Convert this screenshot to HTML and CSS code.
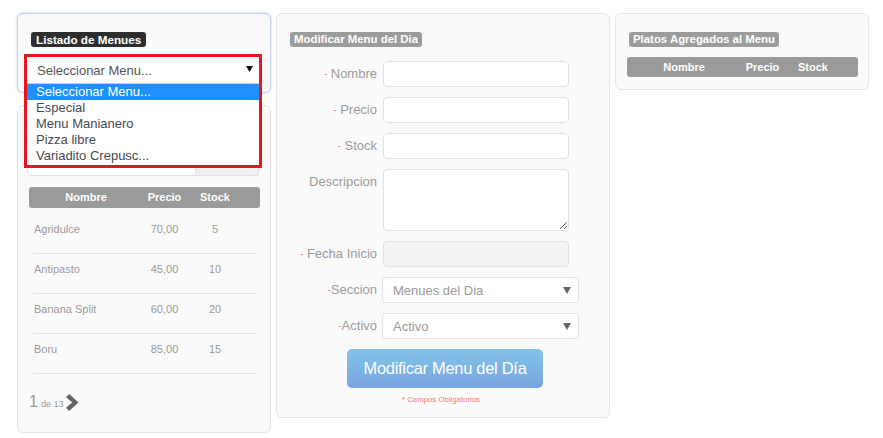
FILE: index.html
```html
<!DOCTYPE html>
<html lang="es">
<head>
<meta charset="utf-8">
<title>Menu del Día</title>
<link rel="stylesheet" href="styles.css">
</head>
<body>
<div class="page">
  <div class="col-left">
    <section class="panel panel-focus">
      <div class="tag tag-dark tag-big">Listado de Menues</div>
      <div class="picker">
        <div class="picker-pop">
          <div class="picker-field">
            <span>Seleccionar Menu...</span>
            <svg class="caret-black" width="7" height="6" viewBox="0 0 7 6"><polygon points="0,0 7,0 3.5,6" fill="#111"/></svg>
          </div>
          <ul class="picker-list">
            <li class="on">Seleccionar Menu...</li>
            <li>Especial</li>
            <li>Menu Manianero</li>
            <li>Pizza libre</li>
            <li>Variadito Crepusc...</li>
          </ul>
        </div>
      </div>
    </section>

    <section class="panel panel-list">
      <div class="tag-space"></div>
      <div class="search">
        <div class="search-input"></div>
        <div class="search-btn"></div>
      </div>
      <div class="thead cols">
        <span>Nombre</span><span>Precio</span><span>Stock</span>
      </div>
      <div class="rows">
        <div class="row cols"><span class="name">Agridulce</span><span>70,00</span><span>5</span></div>
        <div class="row cols"><span class="name">Antipasto</span><span>45,00</span><span>10</span></div>
        <div class="row cols"><span class="name">Banana Split</span><span>60,00</span><span>20</span></div>
        <div class="row cols"><span class="name">Boru</span><span>85,00</span><span>15</span></div>
      </div>
      <div class="pager">
        <span class="pg-num">1</span><span class="pg-of">de 13</span>
        <svg class="chev" width="13" height="17" viewBox="0 0 13 17"><polygon points="0,3.2 3.2,0 12.5,8.5 3.2,17 0,13.8 6.2,8.5" fill="#666"/></svg>
      </div>
    </section>
  </div>

  <section class="panel panel-form">
    <div class="tag">Modificar Menu del Dia</div>
    <div class="form">
      <label class="lbl"><span class="req">-</span> Nombre</label>
      <input class="field" type="text">
      <label class="lbl"><span class="req">-</span> Precio</label>
      <input class="field" type="text">
      <label class="lbl"><span class="req">-</span> Stock</label>
      <input class="field" type="text">
      <label class="lbl">Descripcion</label>
      <textarea class="field area"></textarea>
      <label class="lbl"><span class="req">-</span> Fecha Inicio</label>
      <input class="field disabled" type="text" disabled>
      <label class="lbl"><span class="req">-</span>Seccion</label>
      <div class="dropdown"><span>Menues del Dia</span><svg width="8" height="8" viewBox="0 0 8 8"><polygon points="0,1 8,1 4,8" fill="#666"/></svg></div>
      <label class="lbl"><span class="req">-</span>Activo</label>
      <div class="dropdown"><span>Activo</span><svg width="8" height="8" viewBox="0 0 8 8"><polygon points="0,1 8,1 4,8" fill="#666"/></svg></div>
    </div>
    <button class="btn" type="button">Modificar Menu del Día</button>
    <div class="note">* Campos Obligatorios</div>
  </section>

  <section class="panel panel-right">
    <div class="tag">Platos Agregados al Menu</div>
    <div class="thead cols">
      <span>Nombre</span><span>Precio</span><span>Stock</span>
    </div>
  </section>
</div>
</body>
</html>
```
FILE: styles.css
```css
* { box-sizing: border-box; }
html, body { margin: 0; padding: 0; background: #fff; }
body { font-family: "Liberation Sans", Arial, sans-serif; color: #999; }

.page {
  display: flex;
  align-items: flex-start;
  gap: 5px;
  padding: 13px 0 0 17px;
}

.col-left {
  width: 254px;
  display: flex;
  flex-direction: column;
  gap: 12px;
}

.panel {
  background: #fafafa;
  border: 1px solid #e4e4e4;
  border-radius: 6px;
  padding: 18px 10px 0 11px;
}

.panel-focus {
  border-color: #c4d3e4;
  box-shadow: 0 0 3px rgba(120, 160, 215, 0.45);
  padding-bottom: 9px;
}

.tag {
  display: block;
  width: max-content;
  margin-left: 2px;
  height: 15px;
  line-height: 15px;
  padding: 0 4px;
  background: #9c9c9c;
  color: #fff;
  font-weight: bold;
  font-size: 11.4px;
  border-radius: 3px;
  white-space: nowrap;
}
.tag-dark { background: #2e2e2e; }
.tag-big { font-size: 11.7px; padding: 0 5px; }
.tag-space { height: 15px; }

/* select with open list */
.picker {
  position: relative;
  margin: 10px 0 0 -2px;
  width: 232px;
  height: 26px;
}
.picker-pop {
  position: absolute;
  top: 0;
  left: 0;
  width: 232px;
  background: #fff;
  outline: 3px solid #e9151e;
  z-index: 5;
}
.picker-field {
  height: 27px;
  border-bottom: 1px solid #cfcfcf;
  display: flex;
  align-items: center;
  justify-content: space-between;
  padding: 0 6px 0 10px;
  font-size: 13px;
  color: #555;
}
.caret-black { margin-top: -2px; }
.picker-list {
  list-style: none;
  margin: 0;
  padding: 0 0 1px;
}
.picker-list li {
  height: 16px;
  line-height: 16px;
  padding-left: 9px;
  font-size: 13px;
  color: #484850;
}
.picker-list li.on { background: #1e90ff; color: #fff; }

/* list panel */
.panel-list { padding-bottom: 21px; }
.search {
  display: flex;
  margin: 11px 0 0 -2px;
  width: 232px;
  height: 26px;
}
.search-input {
  flex: 1;
  background: #fff;
  border: 1px solid #e0e0e0;
  border-radius: 4px 0 0 4px;
}
.search-btn {
  width: 63px;
  background: #efefef;
  border: 1px solid #e0e0e0;
  border-left: 0;
  border-radius: 0 4px 4px 0;
}

.cols {
  display: grid;
  grid-template-columns: 114px 43px 58px 1fr;
}
.thead {
  margin-top: 11px;
  height: 21px;
  line-height: 21px;
  background: #9a9a9a;
  border-radius: 3px;
  color: #fff;
  font-weight: bold;
  font-size: 11px;
}
.thead span { text-align: center; white-space: nowrap; }

.rows { margin: 6px 4px 0; }
.row {
  grid-template-columns: 110px 43px 58px 1fr;
  height: 40px;
  padding-top: 8px;
  line-height: 15px;
  font-size: 11px;
  color: #9a9a9a;
  border-bottom: 1px solid #e2e2e2;
}
.row span { text-align: center; }
.row span.name { text-align: left; padding-left: 1px; }

.pager {
  margin-top: 19px;
  display: flex;
  align-items: center;
  height: 18px;
  color: #999;
}
.pg-num { font-size: 16px; margin-right: 3px; }
.pg-of { font-size: 9px; margin-top: 3px; margin-right: 3px; }
.chev { display: block; }

/* form panel */
.panel-form {
  width: 334px;
  padding-bottom: 12px;
}
.form {
  margin-top: 14px;
  display: grid;
  grid-template-columns: 89px 186px;
  column-gap: 6px;
  row-gap: 10px;
  align-items: start;
}
.lbl {
  text-align: right;
  font-size: 13px;
  line-height: 26px;
  color: #9a9a9a;
  white-space: nowrap;
}
.req { color: #f55; font-size: 9px; vertical-align: 1px; }
.field {
  display: block;
  width: 186px;
  height: 26px;
  margin: 0;
  border: 1px solid #e1e1e1;
  border-radius: 4px;
  background: #fff;
  font: inherit;
  outline: none;
}
.area { height: 62px; resize: both; }
.disabled { background: #f3f3f3; }
.dropdown {
  width: 197px;
  margin-left: -1px;
  height: 26px;
  background: #fff;
  border: 1px solid #e1e1e1;
  border-radius: 4px;
  display: flex;
  align-items: center;
  justify-content: space-between;
  padding: 0 7px 0 10px;
  font-size: 13px;
  color: #9a9a9a;
}
.btn {
  display: block;
  margin: 10px 0 0 59px;
  width: 196px;
  height: 39px;
  border: 0;
  border-radius: 5px;
  background: linear-gradient(#81c4e6, #7aa3e2);
  color: #fff;
  font-family: "Liberation Sans", Arial, sans-serif;
  font-size: 16.5px;
  letter-spacing: -0.3px;
  padding: 0;
}
.note {
  margin: 7px 0 0 114px;
  height: 10px;
  line-height: 10px;
  font-size: 7.8px;
  color: #f77;
}

/* right panel */
.panel-right {
  width: 254px;
  padding-bottom: 12px;
}
.panel-right .thead { margin-top: 10px; height: 20px; line-height: 20px; }
```
